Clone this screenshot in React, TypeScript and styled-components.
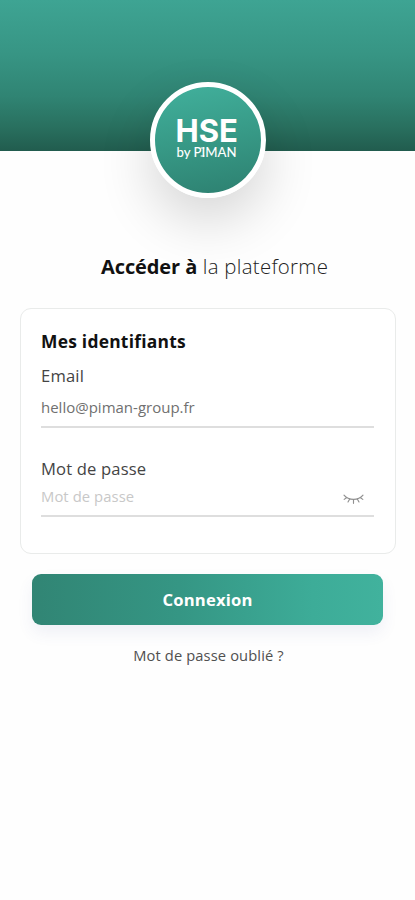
import React from "react";
import styled, { createGlobalStyle } from "styled-components";

const GlobalStyle = createGlobalStyle`
  * { box-sizing: border-box; }
  body {
    margin: 0;
    background: #fefefe;
    font-family: "Open Sans", "Noto Sans", sans-serif;
    color: #111;
  }
`;

const Screen = styled.main`
  display: flex;
  flex-direction: column;
  width: 415px;
  height: 900px;
  overflow: hidden;
`;

const Banner = styled.header`
  flex: none;
  display: flex;
  justify-content: center;
  height: 151px;
  padding-top: 82px;
  background: linear-gradient(180deg, #3ea493 0%, #379584 36%, #308473 64%, #29705f 84%, #215c4e 100%);
`;

const Logo = styled.div`
  flex: none;
  width: 116px;
  height: 116px;
  border: 5.5px solid #fff;
  border-radius: 50%;
  background: linear-gradient(170deg, #41b09c 0%, #379986 50%, #2d8070 100%);
  box-shadow: 0 23px 54px rgba(0, 0, 0, 0.16);

  svg {
    display: block;
    width: 105px;
    height: 105px;
  }
`;

const Title = styled.h1`
  height: 28px;
  margin: 101px 0 0 101px;
  font-size: 20.4px;
  line-height: 28px;
  font-weight: 300;
  letter-spacing: 0.3px;
  color: #222;
  white-space: nowrap;

  b { font-size: 20px; font-weight: 700; letter-spacing: -0.1px; color: #111; }
`;

const Card = styled.section`
  flex: none;
  display: flex;
  flex-direction: column;
  height: 246px;
  margin: 28px 19px 0 20px;
  padding: 19px 21px 0 20px;
  border: 1.5px solid #e9ebea;
  border-radius: 11px;
  background: #fff;
`;

const CardTitle = styled.h2`
  margin: 0;
  font-size: 17.4px;
  line-height: 26px;
  font-weight: 700;
  letter-spacing: 0.25px;
`;

const Label = styled.label<{ $gap: number }>`
  margin-top: ${(p) => p.$gap}px;
  font-size: 16.6px;
  line-height: 24px;
  font-weight: 400;
  letter-spacing: 0.16px;
  color: #444;
`;

const Field = styled.div<{ $height: number; $muted?: boolean }>`
  display: flex;
  align-items: center;
  justify-content: space-between;
  height: ${(p) => p.$height}px;
  padding-bottom: ${(p) => (p.$muted ? 4 : 0)}px;
  border-bottom: 2px solid #dedede;
  font-size: ${(p) => (p.$muted ? 14.8 : 15)}px;
  letter-spacing: ${(p) => (p.$muted ? 0.08 : 0)}px;
  font-weight: 400;
  color: ${(p) => (p.$muted ? "#c8c8c8" : "#707070")};

  svg { margin: 6px 10px 0 0; }
`;

const Submit = styled.button`
  flex: none;
  height: 51px;
  margin: 20px 32px 0;
  border: 0;
  border-radius: 9px;
  background: linear-gradient(90deg, #318574 0%, #359684 42%, #3dac98 80%, #41b29d 100%);
  box-shadow: 0 8px 16px rgba(60, 80, 150, 0.08);
  color: #fff;
  font: 700 16.6px/24px "Open Sans", sans-serif;
  letter-spacing: 0.2px;
`;

const Forgot = styled.a`
  margin-top: 19px;
  padding-left: 2px;
  text-align: center;
  font-size: 14.7px;
  line-height: 22px;
  font-weight: 400;
  letter-spacing: 0.12px;
  color: #505050;
`;

const ClosedEye = () => (
  <svg width="21" height="11" viewBox="0 0 21 11" fill="none" stroke="#909090" strokeWidth="1.15" strokeLinecap="round">
    <path d="M1 1.2C3 3.6 6.5 5.4 10.5 5.4S18 3.6 20 1.2" />
    <path d="M3.5 3.7L1.2 5.4M6.7 5L5 8M10.5 5.6V9.3M14.3 5L16 8M17.5 3.7L19.8 5.4" />
  </svg>
);

const Wordmark = () => (
  <svg viewBox="0 0 105 105" fill="#fff">
    <text x="20.5" y="54.5" fontFamily="Inter, sans-serif" fontSize="31.5" fontWeight="700" textLength="62.5" lengthAdjust="spacingAndGlyphs">HSE</text>
    <text x="21.5" y="69.5" fontFamily="Lato, sans-serif" fontSize="12.6" fontWeight="500" textLength="60" lengthAdjust="spacingAndGlyphs">by PIMAN</text>
    <path d="M45.6 61h3.8M45.6 69h3.8" stroke="#fff" strokeWidth="1" />
  </svg>
);

export default function App() {
  return (
    <>
      <GlobalStyle />
      <Screen>
        <Banner>
          <Logo><Wordmark /></Logo>
        </Banner>
        <Title><b>Accéder à</b> la plateforme</Title>
        <Card>
          <CardTitle>Mes identifiants</CardTitle>
          <Label $gap={10}>Email</Label>
          <Field $height={40}>hello@piman-group.fr</Field>
          <Label $gap={29}>Mot de passe</Label>
          <Field $height={36} $muted>
            <span>Mot de passe</span>
            <ClosedEye />
          </Field>
        </Card>
        <Submit>Connexion</Submit>
        <Forgot>Mot de passe oublié ?</Forgot>
      </Screen>
    </>
  );
}
